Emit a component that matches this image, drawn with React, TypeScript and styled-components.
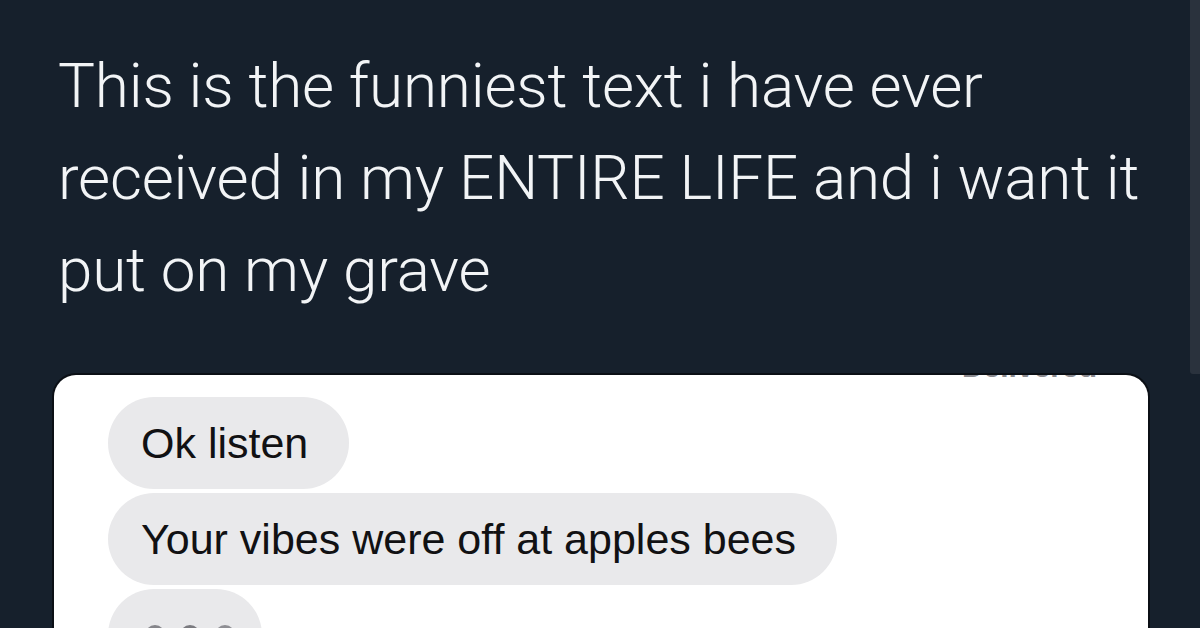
import React from "react";
import styled, { createGlobalStyle } from "styled-components";

const Global = createGlobalStyle`
  html, body { margin: 0; padding: 0; background: #16202c; }
  body { width: 1200px; height: 628px; overflow: hidden; }
`;

const Page = styled.div`
  display: flex;
  width: 1200px;
  height: 628px;
  overflow: hidden;
  background: #16202c;
`;

const Main = styled.main`
  flex: 1;
  display: flex;
  flex-direction: column;
  padding: 40px 0 0 52px;
`;

const Track = styled.div`
  width: 10px;
  display: flex;
  flex-direction: column;
`;

const Thumb = styled.div`
  height: 374px;
  background: #2a323d;
  border-bottom-left-radius: 3px;
`;

const Heading = styled.p`
  margin: 0 0 0 6px;
  color: #f2f4f6;
  font-family: Roboto, "Liberation Sans", sans-serif;
  font-weight: 300;
  font-size: 62px;
  line-height: 92px;
  letter-spacing: -0.2px;
  width: 1110px;
`;

const Card = styled.section`
  margin-top: 57px;
  width: 1098px;
  flex: 1;
  box-sizing: border-box;
  background: #ffffff;
  border: 2px solid #0b0f15;
  border-bottom: none;
  border-radius: 24px 24px 0 0;
  overflow: hidden;
  display: flex;
  flex-direction: column;
  padding: 0 51px 0 54px;
`;

const StatusRow = styled.div`
  display: flex;
  justify-content: flex-end;
  margin-top: -23px;
  margin-bottom: 15px;
`;

const Status = styled.span`
  font-family: "Liberation Sans", Arial, sans-serif;
  font-weight: 700;
  font-size: 30px;
  line-height: 30px;
  color: #8a8a8f;
`;

const Thread = styled.div`
  display: flex;
  flex-direction: column;
  align-items: flex-start;
  gap: 4px;
`;

const Bubble = styled.div`
  height: 92px;
  box-sizing: border-box;
  padding: 0 41px 0 33px;
  border-radius: 46px;
  background: #e9e9eb;
  color: #111113;
  font-family: "Liberation Sans", Arial, sans-serif;
  font-size: 43px;
  line-height: 92px;
  white-space: nowrap;
`;

const Typing = styled.div`
  height: 92px;
  width: 154px;
  box-sizing: border-box;
  padding: 0 0 0 37px;
  border-radius: 46px;
  background: #e9e9eb;
  display: flex;
  align-items: center;
  gap: 15px;
`;

const Dot = styled.span<{ $shade: string }>`
  width: 20px;
  height: 20px;
  border-radius: 50%;
  background: ${(p) => p.$shade};
`;

export default function App() {
  return (
    <Page>
      <Global />
      <Main>
        <Heading>
          This is the funniest text i have ever received in my ENTIRE LIFE and i want it put on my grave
        </Heading>
        <Card>
          <StatusRow>
            <Status>Delivered</Status>
          </StatusRow>
          <Thread>
            <Bubble>Ok listen</Bubble>
            <Bubble>Your vibes were off at apples bees</Bubble>
            <Typing>
              <Dot $shade="#86868b" />
              <Dot $shade="#7b7b80" />
              <Dot $shade="#8f8f94" />
            </Typing>
          </Thread>
        </Card>
      </Main>
      <Track>
        <Thumb />
      </Track>
    </Page>
  );
}
